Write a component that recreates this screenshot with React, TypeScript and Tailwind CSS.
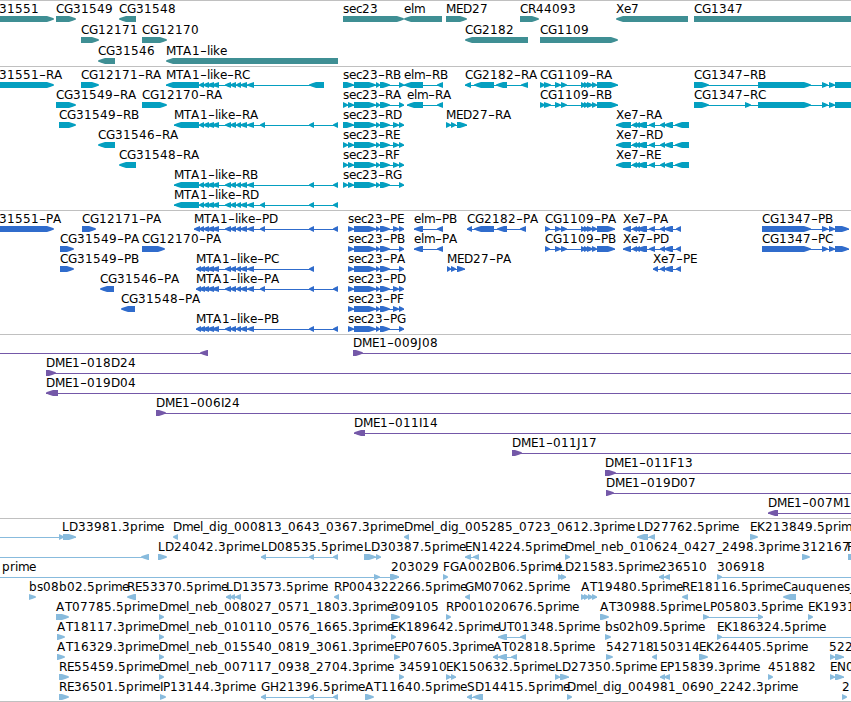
type Dir = ">" | "<";

// [label, label x, strand, exon spans, optional line start, optional line end]
type Feature = [string, number, Dir, number[], number?, number?];

type Track = {
  name: string;
  color: string;
  height: string;
  pitch: number;
  rows: Feature[][];
};

const MTA = [203, 209, 207, 214, 212, 219, 225, 231, 230, 236, 236, 241, 240, 247, 247, 254];
const MTA_R = [199, 204, ...MTA];
const MTA_P = [196, 201, 199, 205, ...MTA];
const SEC = [354, 376, 376, 380, 380, 390];
const CG1109 = [555, 561, 561, 567, 581, 586, 584, 589, 587, 593, 592, 597];
const XE7 = [632, 637, 635, 640, 637, 647, 649, 655, 660, 665, 664, 673];
const CG1347 = [822, 828, 829, 835];

const tracks: Track[] = [
  {
    name: "Genes",
    color: "#3f8f94",
    height: "h-[66px]",
    pitch: 21,
    rows: [
      [
        ["31551", -1, ">", [-10, 54]],
        ["CG31549", 56, ">", [56, 76]],
        ["CG31548", 119, "<", [119, 136]],
        ["sec23", 343, ">", [343, 404]],
        ["elm", 404, "<", [404, 442]],
        ["MED27", 446, ">", [446, 467]],
        ["CR44093", 520, ">", [520, 539]],
        ["Xe7", 616, "<", [616, 688]],
        ["CG1347", 694, ">", [694, 870]],
      ],
      [
        ["CG12171", 81, ">", [81, 99]],
        ["CG12170", 142, ">", [142, 167]],
        ["CG2182", 465, "<", [465, 528]],
        ["CG1109", 540, ">", [540, 618]],
      ],
      [
        ["CG31546", 98, "<", [98, 115]],
        ["MTA1-like", 166, "<", [166, 338]],
      ],
    ],
  },
  {
    name: "Transcripts",
    color: "#049fc0",
    height: "h-[144px]",
    pitch: 20,
    rows: [
      [
        ["31551-RA", -1, ">", [-10, 54]],
        ["CG12171-RA", 81, ">", [81, 99]],
        ["MTA1-like-RC", 166, "<", [166, 199, ...MTA_R, 309, 324]],
        ["sec23-RB", 343, ">", [343, 354, ...SEC, 399, 404]],
        ["elm-RB", 404, "<", [404, 423, 437, 443]],
        ["CG2182-RA", 465, "<", [465, 471, 474, 494, 496, 507, 521, 528]],
        ["CG1109-RA", 540, ">", [540, 545, 544, 551, ...CG1109, 597, 618]],
        ["CG1347-RB", 694, ">", [694, 709, 758, 811, ...CG1347, 835, 870]],
      ],
      [
        ["CG31549-RA", 56, ">", [56, 76]],
        ["CG12170-RA", 142, ">", [142, 167]],
        ["sec23-RA", 343, ">", [343, 348, 348, 354, ...SEC, 399, 404]],
        ["elm-RA", 407, "<", [407, 423, 437, 443]],
        ["CG1109-RB", 540, ">", [540, 545, 544, 551, ...CG1109, 597, 618]],
        ["CG1347-RC", 694, ">", [694, 709, 745, 751, 758, 811, ...CG1347, 835, 870]],
      ],
      [
        ["CG31549-RB", 59, ">", [59, 76]],
        ["MTA1-like-RA", 174, "<", [174, 199, ...MTA_R, 260, 265, 309, 314, 333, 338]],
        ["sec23-RD", 343, ">", [343, 354, ...SEC, 393, 399, 399, 404]],
        ["MED27-RA", 446, ">", [446, 451, 451, 456, 457, 467]],
        ["Xe7-RA", 616, "<", [616, 631, ...XE7, 675, 689]],
      ],
      [
        ["CG31546-RA", 98, "<", [98, 115]],
        ["sec23-RE", 343, ">", [343, 348, 348, 354, ...SEC, 393, 399, 399, 404]],
        ["Xe7-RD", 616, "<", [616, 631, ...XE7, 675, 689]],
      ],
      [
        ["CG31548-RA", 119, "<", [119, 136]],
        ["sec23-RF", 343, ">", [343, 348, 348, 354, ...SEC, 393, 399, 399, 404]],
        ["Xe7-RE", 616, "<", [616, 631, ...XE7, 675, 689]],
      ],
      [
        ["MTA1-like-RB", 174, "<", [174, 199, ...MTA_R, 309, 314, 333, 338]],
        ["sec23-RG", 343, ">", [343, 348, 348, 354, ...SEC, 399, 404]],
      ],
      [["MTA1-like-RD", 174, "<", [174, 199, ...MTA_R, 260, 265, 309, 314, 333, 338]]],
    ],
  },
  {
    name: "Proteins",
    color: "#306ccc",
    height: "h-[124px]",
    pitch: 20,
    rows: [
      [
        ["31551-PA", -1, ">", [-10, 54]],
        ["CG12171-PA", 82, ">", [82, 96]],
        ["MTA1-like-PD", 194, "<", [194, 200, ...MTA_R, 260, 265, 309, 314, 333, 338]],
        ["sec23-PE", 348, ">", [348, 354, ...SEC, 393, 399, 399, 404]],
        ["elm-PB", 414, "<", [414, 423, 437, 443]],
        ["CG2182-PA", 467, "<", [467, 472, 474, 494, 497, 507, 520, 526]],
        ["CG1109-PA", 545, ">", [545, 550, ...CG1109, 597, 615]],
        ["Xe7-PA", 623, "<", [623, 631, ...XE7, 676, 681]],
        ["CG1347-PB", 762, ">", [762, 811, ...CG1347, 835, 849]],
      ],
      [
        ["CG31549-PA", 60, ">", [60, 74]],
        ["CG12170-PA", 142, ">", [142, 165]],
        ["sec23-PB", 348, ">", [348, 354, ...SEC, 399, 404]],
        ["elm-PA", 414, "<", [414, 423, 437, 443]],
        ["CG1109-PB", 545, ">", [545, 550, ...CG1109, 597, 615]],
        ["Xe7-PD", 623, "<", [623, 631, ...XE7, 676, 681]],
        ["CG1347-PC", 762, ">", [762, 811, ...CG1347, 835, 849]],
      ],
      [
        ["CG31549-PB", 60, ">", [60, 74]],
        ["MTA1-like-PC", 196, "<", [...MTA_P, 309, 314]],
        ["sec23-PA", 348, ">", [348, 354, ...SEC, 399, 404]],
        ["MED27-PA", 447, ">", [447, 451, 451, 456, 457, 465]],
        ["Xe7-PE", 653, "<", [653, 658, 660, 665, 664, 673, 676, 681]],
      ],
      [
        ["CG31546-PA", 100, "<", [100, 114]],
        ["MTA1-like-PA", 196, "<", [...MTA_P, 260, 265, 309, 314, 333, 338]],
        ["sec23-PD", 348, ">", [348, 354, ...SEC, 393, 399, 399, 404]],
      ],
      [
        ["CG31548-PA", 121, "<", [121, 135]],
        ["sec23-PF", 348, ">", [348, 354, ...SEC, 393, 399, 399, 404]],
      ],
      [
        ["MTA1-like-PB", 196, "<", [...MTA_P, 309, 314, 333, 338]],
        ["sec23-PG", 348, ">", [348, 354, ...SEC, 399, 404]],
      ],
    ],
  },
  {
    name: "BACs",
    color: "#7458a8",
    height: "h-[184px]",
    pitch: 20,
    rows: [
      [
        ["", 0, "<", [200, 208], 0, 208],
        ["DME1-009J08", 353, ">", [353, 363], 353, 851],
      ],
      [["DME1-018D24", 46, ">", [46, 56], 46, 851]],
      [["DME1-019D04", 46, "<", [46, 58], 46, 851]],
      [["DME1-006I24", 156, ">", [156, 166], 156, 851]],
      [["DME1-011I14", 354, "<", [354, 365], 354, 851]],
      [["DME1-011J17", 512, ">", [512, 522], 512, 851]],
      [["DME1-011F13", 605, ">", [605, 616], 605, 851]],
      [["DME1-019D07", 606, ">", [606, 614], 606, 851]],
      [["DME1-007M1", 768, "<", [768, 778], 768, 851]],
    ],
  },
  {
    name: "ESTs",
    color: "#88bbdd",
    height: "h-[184px]",
    pitch: 20,
    rows: [
      [
        ["LD33981.3prime", 62, ">", [59, 64, 63, 76], 0, 76],
        ["Dmel_dig_000813_0643_0367.3prime", 173, "<", [173, 178]],
        ["Dmel_dig_005285_0723_0612.3prime", 404, "<", [404, 409]],
        ["LD27762.5prime", 637, "<", [637, 648, 649, 655]],
        ["EK213849.5prim", 750, ">", [750, 758]],
      ],
      [
        ["", 0, "<", [141, 149], 0, 149],
        ["LD24042.3prime", 158, ">", [158, 167]],
        ["LD08535.5prime", 261, "<", [261, 266, 309, 314, 333, 338]],
        ["LD30387.5prime", 364, ">", [364, 376, 376, 381]],
        ["EN14224.5prime", 465, "<", [465, 471, 473, 479]],
        ["Dmel_neb_010624_0427_2498.3prime", 565, ">", [565, 570]],
        ["312167", 802, ">", [802, 810]],
        ["F", 847, ">", [848, 862]],
      ],
      [
        ["prime", 2, ">", [374, 380, 390, 399], 0, 399],
        ["203029", 391, ">", [391, 399]],
        ["FGA002B06.5prime", 443, ">", [443, 448]],
        ["LD21583.5prime", 558, ">", [558, 563, 561, 566]],
        ["236510", 659, "<", [659, 664, 664, 670]],
        ["306918", 717, ">", [717, 722], 717, 851],
      ],
      [
        ["bs08b02.5prime", 29, ">", [29, 36]],
        ["RE53370.5prime", 127, "<", [127, 136]],
        ["LD13573.5prime", 226, "<", [226, 231, 230, 235, 235, 241]],
        ["RP004322266.5prime", 334, "<", [334, 339]],
        ["GM07062.5prime", 465, "<", [465, 470]],
        ["AT19480.5prime", 581, ">", [581, 586, 584, 589, 588, 593, 592, 597]],
        ["RE18116.5prime", 682, "<", [682, 688]],
        ["Cauquenes_", 783, "<", [783, 796]],
      ],
      [
        ["AT07785.5prime", 56, ">", [56, 69]],
        ["Dmel_neb_008027_0571_1803.3prime", 159, ">", [159, 164]],
        ["309105", 391, ">", [391, 400]],
        ["RP001020676.5prime", 446, ">", [446, 451]],
        ["AT30988.5prime", 600, ">", [600, 609]],
        ["LP05803.5prime", 703, ">", [703, 709, 758, 763]],
        ["EK1931", 808, ">", [808, 813]],
      ],
      [
        ["AT18117.3prime", 57, ">", [57, 65]],
        ["Dmel_neb_010110_0576_1665.3prime", 159, ">", [159, 164]],
        ["EK189642.5prime", 391, ">", [391, 396]],
        ["UT01348.5prime", 498, "<", [498, 507, 520, 526]],
        ["bs02h09.5prime", 605, ">", [605, 611]],
        ["EK186324.5prime", 717, ">", [717, 722], 717, 851],
      ],
      [
        ["AT16329.3prime", 57, ">", [57, 65]],
        ["Dmel_neb_015540_0819_3061.3prime", 159, ">", [159, 164]],
        ["EP07605.3prime", 394, ">", [394, 400]],
        ["AT02818.5prime", 493, "<", [493, 498, 498, 507, 511, 517]],
        ["542718", 606, ">", [606, 613]],
        ["150314", 652, "<", [652, 657]],
        ["EK264405.5prime", 699, ">", [699, 708]],
        ["522", 829, ">", [830, 835, 835, 844]],
      ],
      [
        ["RE55459.5prime", 59, ">", [59, 69]],
        ["Dmel_neb_007117_0938_2704.3prime", 159, ">", [159, 164]],
        ["345910", 399, ">", [399, 404]],
        ["EK150632.5prime", 446, ">", [446, 451, 451, 456]],
        ["LD27350.5prime", 555, ">", [555, 560, 560, 569]],
        ["EP15839.3prime", 660, "<", [660, 665, 664, 670]],
        ["451882", 768, ">", [768, 773]],
        ["EN0", 830, ">", [830, 835, 835, 844]],
      ],
      [
        ["RE36501.5prime", 59, ">", [59, 69]],
        ["IP13144.3prime", 160, ">", [160, 166]],
        ["GH21396.5prime", 261, "<", [261, 266, 309, 314, 333, 338]],
        ["AT11640.5prime", 365, ">", [365, 374]],
        ["SD14415.5prime", 467, "<", [467, 472, 473, 483]],
        ["Dmel_dig_004981_0690_2242.3prime", 567, ">", [567, 572]],
        ["2", 842, ">", [842, 847]],
      ],
    ],
  },
];

// whole-pixel advances; anything missing is 8px wide
const ADVANCE: Record<string, number> = {
  "-": 7, ".": 4, _: 6, A: 9, D: 9, E: 7, F: 7, G: 9, H: 9, I: 3, J: 4, L: 7, M: 10, N: 9,
  P: 7, T: 7, U: 9, a: 7, c: 6, e: 7, i: 3, k: 7, l: 3, m: 11, r: 5, s: 6,
};

// 6px tall bar whose last few pixels taper to a rounded tip
const exonPath = (x1: number, x2: number, dir: Dir, y: number) => {
  const width = x2 - x1;
  const head = Math.min(width, 7);
  const [tail, tip, s] = dir === ">" ? [x1, x2, 1] : [x2, x1, -1];
  const neck = tip - s * head;
  const mid = tip - s * head * 0.45;
  return `M${tail} ${y}H${neck}L${mid} ${y + 1.2}L${tip} ${y + 2.4}V${y + 3.6}L${mid} ${y + 4.8}L${neck} ${y + 6}H${tail}Z`;
};

const Label = ({ text, x, y }: { text: string; x: number; y: number }) => {
  let pen = x;
  return (
    <text y={y} fill="#000">
      {text.split(/(-)/).map((part, i) => {
        const xs = [...part].map((ch) => {
          const at = pen;
          pen += ADVANCE[ch] ?? 8;
          return at;
        });
        return part === "-" ? (
          <tspan key={i} x={xs[0]} textLength={7} lengthAdjust="spacingAndGlyphs">
            {part}
          </tspan>
        ) : (
          <tspan key={i} x={xs.join(" ")}>
            {part}
          </tspan>
        );
      })}
    </text>
  );
};

const FeatureGlyph = ({ feature, y }: { feature: Feature; y: number }) => {
  const [label, labelX, dir, spans, from, to] = feature;
  const start = from ?? spans[0];
  const end = to ?? spans[spans.length - 1];
  const exons: string[] = [];
  for (let i = 0; i < spans.length; i += 2) {
    exons.push(exonPath(spans[i], spans[i + 1], dir, y));
  }

  return (
    <g>
      {(spans.length > 2 || to !== undefined) && (
        <rect x={start} y={y + 3} width={end - start} height={1} />
      )}
      <path d={exons.join("")} />
      {label && <Label text={label} x={labelX} y={y - 3} />}
    </g>
  );
};

const TrackPanel = ({ track }: { track: Track }) => (
  <section aria-label={track.name} className={`w-full border-t border-[#c0c0c0] ${track.height}`}>
    <svg
      className="block h-full w-full [font-family:'DejaVu_Sans',sans-serif] text-[12px] [font-kerning:none]"
      fill={track.color}
    >
      {track.rows.map((row, i) =>
        row.map((feature) => (
          <FeatureGlyph key={`${i}-${feature[0]}`} feature={feature} y={15 + i * track.pitch} />
        ))
      )}
    </svg>
  </section>
);

export default function App() {
  return (
    <main className="flex h-[702px] w-[851px] flex-col overflow-hidden border-b border-[#c0c0c0] bg-white">
      {tracks.map((track) => (
        <TrackPanel key={track.name} track={track} />
      ))}
    </main>
  );
}
